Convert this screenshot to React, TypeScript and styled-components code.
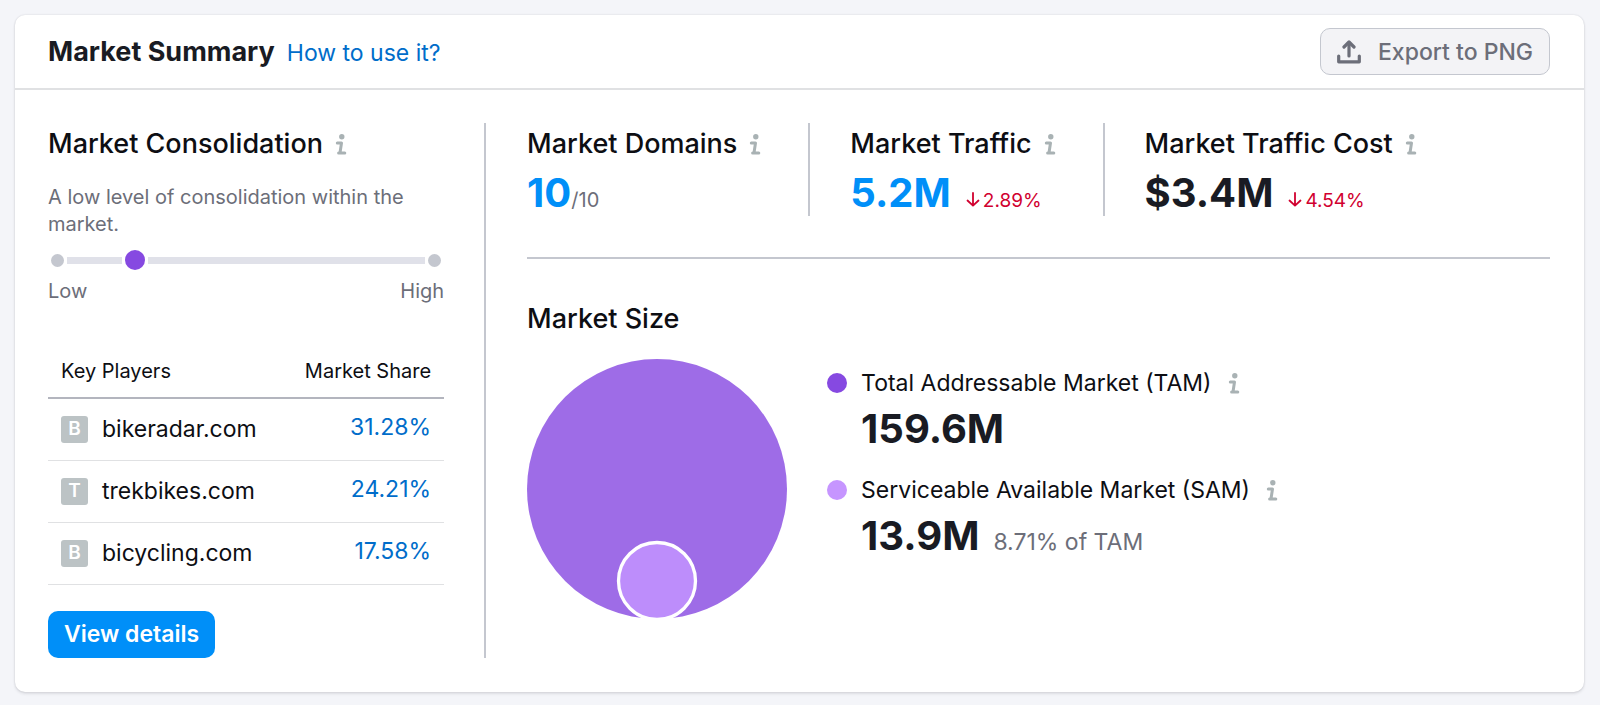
import React from 'react';
import styled, { createGlobalStyle } from 'styled-components';

const color = {
  text: '#191b23',
  strong: '#0d0e13',
  muted: '#6c6e79',
  link: '#006dca',
  blue: '#008ff8',
  red: '#d1002f',
  line: '#c4c7cf',
  soft: '#e0e1e3',
  icon: '#a9b2b4',
  tam: '#8649e1',
  sam: '#c695ff',
};

const GlobalStyle = createGlobalStyle`
  *, *::before, *::after { box-sizing: border-box; }
  body {
    margin: 0;
    background: #f4f5f9;
    color: ${color.strong};
    font-family: Inter, "Liberation Sans", sans-serif;
    font-size: 23px;
    line-height: 32px;
  }
  h2, h3, p, table, dl, dd, dt { margin: 0; padding: 0; font-weight: inherit; }
  button { font-family: inherit; cursor: pointer; }
`;

const Page = styled.main`
  padding: 15px 16px 13px 15px;
`;

const Card = styled.section`
  background: #fff;
  border-radius: 10px;
  box-shadow: 0 0 2px rgba(25, 27, 35, 0.16), 0 2px 3px rgba(25, 27, 35, 0.1);
`;

const Header = styled.header`
  display: flex;
  align-items: center;
  justify-content: space-between;
  padding: 13px 34px 13px 33px;
  border-bottom: 2px solid ${color.soft};
`;

const TitleGroup = styled.div`
  display: flex;
  align-items: baseline;
  gap: 12px;
  padding-top: 2px;
`;

const Title = styled.h2`
  font-size: 27px;
  font-weight: 700;
  color: ${color.text};
`;

const Link = styled.a`
  color: ${color.link};
  text-decoration: none;
`;

const Button = styled.button<{ $primary?: boolean }>`
  display: inline-flex;
  align-items: center;
  gap: 17px;
  height: 47px;
  padding: 0 16px;
  border: ${p => (p.$primary ? '0' : `1px solid ${color.line}`)};
  border-radius: 10px;
  background: ${p => (p.$primary ? color.blue : '#f3f3f6')};
  color: ${p => (p.$primary ? '#fff' : color.muted)};
  font-size: 23px;
  font-weight: ${p => (p.$primary ? 600 : 500)};
  line-height: 32px;
`;

const Body = styled.div`
  display: grid;
  grid-template-columns: 7fr 17fr;
  padding: 33px 34px 34px 33px;
`;

const Consolidation = styled.div`
  padding-right: 40px;
  border-right: 2px solid ${color.line};
`;

const Overview = styled.div`
  padding-left: 41px;
`;

const Heading = styled.h3`
  display: flex;
  align-items: center;
  gap: 12px;
  padding-top: 1px;
  font-size: 27px;
  font-weight: 500;
  line-height: 40px;
  white-space: nowrap;
`;

const Note = styled.p`
  margin-top: 20px;
  color: ${color.muted};
  font-size: 20px;
  line-height: 27px;
`;

const Scale = styled.div`
  display: flex;
  align-items: center;
  gap: 3px;
  height: 20px;
  margin-top: 12px;
  padding: 0 3px;
`;

const Segment = styled.span<{ $share: number }>`
  flex: ${p => p.$share} 1 0;
  height: 7px;
  background: #e0e1e9;
`;

const Dot = styled.span<{ $size: number; $fill: string }>`
  flex: none;
  width: ${p => p.$size}px;
  height: ${p => p.$size}px;
  border-radius: 50%;
  background: ${p => p.$fill};
`;

const ScaleLabels = styled.div`
  display: flex;
  justify-content: space-between;
  margin-top: 8px;
  color: ${color.muted};
  font-size: 20px;
  line-height: 27px;
`;

const Table = styled.table`
  width: 100%;
  margin-top: 38px;
  border-collapse: collapse;

  th, td {
    padding: 0 13px;
    text-align: left;
  }
  th:last-child, td:last-child { text-align: right; }
  th {
    height: 55px;
    padding-top: 2px;
    border-bottom: 2px solid #b3b5be;
    font-size: 20px;
    font-weight: 400;
  }
  td {
    height: 62px;
    border-bottom: 1px solid ${color.soft};
  }
  td:last-child { padding-bottom: 5px; }
`;

const Player = styled.div`
  display: flex;
  align-items: center;
  gap: 14px;
`;

const Favicon = styled.span`
  display: flex;
  align-items: center;
  justify-content: center;
  width: 27px;
  height: 27px;
  border-radius: 3px;
  background: #bcc3c5;
  color: #fff;
  font-size: 19px;
  font-weight: 600;
`;

const Actions = styled.div`
  display: flex;
  margin-top: 26px;
`;

const Stats = styled.div`
  display: flex;
  padding-bottom: 41px;
  border-bottom: 2px solid ${color.line};
`;

const Stat = styled.div`
  height: 93px;
  padding-right: 47px;

  & + & {
    padding-left: 40px;
    border-left: 2px solid ${color.line};
  }
`;

const Figures = styled.div`
  display: flex;
  align-items: baseline;
`;

const Value = styled.strong<{ $blue?: boolean }>`
  color: ${p => (p.$blue ? color.blue : color.text)};
  font-size: 40px;
  font-weight: 700;
  line-height: 58px;
`;

const Total = styled.span`
  color: ${color.muted};
  font-size: 20px;
`;

const Change = styled.span`
  display: flex;
  align-items: baseline;
  gap: 3px;
  margin-left: 15px;
  color: ${color.red};
  font-size: 19px;
`;

const Size = styled.div`
  margin-top: 39px;
`;

const Chart = styled.div`
  display: flex;
  gap: 40px;
  margin-top: 20px;

  > svg { flex: none; }
`;

const Legend = styled.dl`
  padding-top: 8px;
`;

const LegendTerm = styled.dt`
  display: flex;
  align-items: center;
  gap: 14px;
`;

const LegendName = styled.span`
  display: flex;
  align-items: center;
  gap: 16px;
  white-space: nowrap;
`;

const LegendValue = styled.dd`
  display: flex;
  align-items: baseline;
  gap: 14px;
  padding: 1px 0 0 34px;
  margin-bottom: 16px;
`;

const Share = styled.span`
  color: ${color.muted};
`;

const Info = () => (
  <svg width="12" height="21" viewBox="0 0 12 21" fill="none" stroke={color.icon} strokeWidth="3" role="img" aria-label="Info">
    <circle cx="6.800" cy="2.700" r="2.700" fill={color.icon} stroke="none" />
    <path d="M2.300 9h4.200L5 18.700M3.600 18.900h6.200" strokeLinecap="round" strokeLinejoin="round" />
  </svg>
);

const Upload = () => (
  <svg width="24" height="24" viewBox="0 0 24 24" fill="none" stroke="currentColor" strokeWidth="3.200" aria-hidden="true">
    <path d="M1.700 16v5.800h20.600v-5.800" strokeLinecap="round" strokeLinejoin="round" />
    <path d="M12 16V3" strokeLinecap="round" />
    <path d="M7 7L12 2l5 5" strokeLinecap="round" strokeLinejoin="round" />
  </svg>
);

const Down = () => (
  <svg width="14" height="15" viewBox="0 0 14 15" fill="none" stroke="currentColor" strokeWidth="1.800" role="img" aria-label="Down">
    <path d="M7 1v12.500M1.500 8.500L7 13.700l5.500-5.200" strokeLinecap="round" strokeLinejoin="round" />
  </svg>
);

const players = [
  { letter: 'B', domain: 'bikeradar.com', share: '31.28%' },
  { letter: 'T', domain: 'trekbikes.com', share: '24.21%' },
  { letter: 'B', domain: 'bicycling.com', share: '17.58%' },
];

export default function App() {
  return (
    <>
      <GlobalStyle />
      <Page>
        <Card>
          <Header>
            <TitleGroup>
              <Title>Market Summary</Title>
              <Link href="#help">How to use it?</Link>
            </TitleGroup>
            <Button type="button"><Upload />Export to PNG</Button>
          </Header>
          <Body>
            <Consolidation>
              <Heading>Market Consolidation<Info /></Heading>
              <Note>A low level of consolidation within the market.</Note>
              <Scale role="img" aria-label="Consolidation level: low">
                <Dot $size={13} $fill={color.line} />
                <Segment $share={1} />
                <Dot $size={20} $fill={color.tam} />
                <Segment $share={5} />
                <Dot $size={13} $fill={color.line} />
              </Scale>
              <ScaleLabels><span>Low</span><span>High</span></ScaleLabels>
              <Table>
                <thead>
                  <tr><th scope="col">Key Players</th><th scope="col">Market Share</th></tr>
                </thead>
                <tbody>
                  {players.map(p => (
                    <tr key={p.domain}>
                      <td><Player><Favicon>{p.letter}</Favicon>{p.domain}</Player></td>
                      <td><Link href="#share">{p.share}</Link></td>
                    </tr>
                  ))}
                </tbody>
              </Table>
              <Actions><Button type="button" $primary>View details</Button></Actions>
            </Consolidation>
            <Overview>
              <Stats>
                <Stat>
                  <Heading>Market Domains<Info /></Heading>
                  <Figures><Value $blue>10</Value><Total>/10</Total></Figures>
                </Stat>
                <Stat>
                  <Heading>Market Traffic<Info /></Heading>
                  <Figures><Value $blue>5.2M</Value><Change><Down />2.89%</Change></Figures>
                </Stat>
                <Stat>
                  <Heading>Market Traffic Cost<Info /></Heading>
                  <Figures><Value>$3.4M</Value><Change><Down />4.54%</Change></Figures>
                </Stat>
              </Stats>
              <Size>
                <Heading>Market Size</Heading>
                <Chart>
                  <svg width="260" height="261" viewBox="0 0 260 261" role="img" aria-label="Market size">
                    <circle cx="130" cy="130" r="130" fill="#9e6ce7" />
                    <circle cx="130" cy="222" r="38.500" fill="#bd8dfb" stroke="#fff" strokeWidth="3.300" />
                  </svg>
                  <Legend>
                    <LegendTerm>
                      <Dot $size={20} $fill={color.tam} />
                      <LegendName>Total Addressable Market (TAM)<Info /></LegendName>
                    </LegendTerm>
                    <LegendValue><Value>159.6M</Value></LegendValue>
                    <LegendTerm>
                      <Dot $size={20} $fill={color.sam} />
                      <LegendName>Serviceable Available Market (SAM)<Info /></LegendName>
                    </LegendTerm>
                    <LegendValue><Value>13.9M</Value><Share>8.71% of TAM</Share></LegendValue>
                  </Legend>
                </Chart>
              </Size>
            </Overview>
          </Body>
        </Card>
      </Page>
    </>
  );
}
